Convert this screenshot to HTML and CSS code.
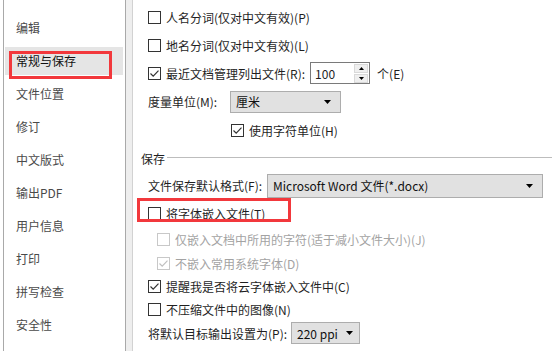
FILE: index.html
```html
<!DOCTYPE html>
<html>
<head>
    <title>选项 - 常规与保存</title>
    <link rel="stylesheet" href="styles.css">
</head>
<body>
    <div class="optWindow">
        <nav class="sideNav">
            <div class="navItem">编辑</div>
            <div class="navItem active">常规与保存<span class="markBox navMark"></span></div>
            <div class="navItem">文件位置</div>
            <div class="navItem">修订</div>
            <div class="navItem">中文版式</div>
            <div class="navItem">输出PDF</div>
            <div class="navItem">用户信息</div>
            <div class="navItem">打印</div>
            <div class="navItem">拼写检查</div>
            <div class="navItem">安全性</div>
        </nav>
        <div class="splitter"></div>
        <main class="optPanel">
            <div class="optRow h27">
                <span class="chk"></span>
                <span class="label">人名分词(仅对中文有效)(P)</span>
            </div>
            <div class="optRow h28">
                <span class="chk"></span>
                <span class="label">地名分词(仅对中文有效)(L)</span>
            </div>
            <div class="optRow h28">
                <span class="chk checked"><svg viewBox="0 0 13 13"><path d="M2.5 6.5 L5.2 9.2 L10.5 3.6"/></svg></span>
                <span class="label">最近文档管理列出文件(R):</span>
                <span class="spinBox">
                    <span class="spinVal">100</span>
                    <span class="spinBtns">
                        <span class="spinBtn"><svg viewBox="0 0 7 4"><path d="M0 4 L3.5 0 L7 4 Z"/></svg></span>
                        <span class="spinBtn"><svg viewBox="0 0 7 4"><path d="M0 0 L7 0 L3.5 4 Z"/></svg></span>
                    </span>
                </span>
                <span class="label unit">个(E)</span>
            </div>
            <div class="optRow h29">
                <span class="label measureLabel">度量单位(M):</span>
                <span class="combo measureCombo">
                    <span class="comboText">厘米</span>
                    <svg class="comboArrow" viewBox="0 0 7 4"><path d="M0 0 L7 0 L3.5 4 Z"/></svg>
                </span>
            </div>
            <div class="optRow h28 indentWide">
                <span class="chk checked"><svg viewBox="0 0 13 13"><path d="M2.5 6.5 L5.2 9.2 L10.5 3.6"/></svg></span>
                <span class="label">使用字符单位(H)</span>
            </div>

            <div class="groupHead">
                <span class="groupTitle">保存</span>
                <span class="groupLine"></span>
            </div>

            <div class="optRow h27">
                <span class="label formatLabel">文件保存默认格式(F):</span>
                <span class="combo formatCombo">
                    <span class="comboText">Microsoft Word 文件(*.docx)</span>
                    <svg class="comboArrow" viewBox="0 0 7 4"><path d="M0 0 L7 0 L3.5 4 Z"/></svg>
                </span>
            </div>
            <div class="optRow h28 marked">
                <span class="markBox rowMark"></span>
                <span class="chk"></span>
                <span class="label">将字体嵌入文件(T)</span>
            </div>
            <div class="optRow h25 indentSmall disabled">
                <span class="chk"></span>
                <span class="label">仅嵌入文档中所用的字符(适于减小文件大小)(J)</span>
            </div>
            <div class="optRow h23 indentSmall disabled">
                <span class="chk checked"><svg viewBox="0 0 13 13"><path d="M2.5 6.5 L5.2 9.2 L10.5 3.6"/></svg></span>
                <span class="label">不嵌入常用系统字体(D)</span>
            </div>
            <div class="optRow h23">
                <span class="chk checked"><svg viewBox="0 0 13 13"><path d="M2.5 6.5 L5.2 9.2 L10.5 3.6"/></svg></span>
                <span class="label">提醒我是否将云字体嵌入文件中(C)</span>
            </div>
            <div class="optRow h23">
                <span class="chk"></span>
                <span class="label">不压缩文件中的图像(N)</span>
            </div>
            <div class="optRow h24">
                <span class="label">将默认目标输出设置为(P):</span>
                <span class="combo ppiCombo">
                    <span class="comboText">220 ppi</span>
                    <svg class="comboArrow" viewBox="0 0 7 4"><path d="M0 0 L7 0 L3.5 4 Z"/></svg>
                </span>
            </div>
        </main>
    </div>
</body>
</html>
```

FILE: styles.css
```css
body {
    margin: 0;
    background-color: #fff;
    color: #1f1f1f;
    font-family: "Noto Sans CJK SC", "Noto Sans", sans-serif;
    font-size: 12px;
}

.optWindow {
    display: flex;
    width: 552px;
    height: 351px;
    overflow: hidden;
}

/* left list */
.sideNav {
    display: flex;
    flex-direction: column;
    gap: 5px;
    margin-left: 3px;
    padding-top: 14px;
    width: 121px;
    border-left: 1px solid #a9a9a9;
    border-right: 1px solid #a9a9a9;
    flex-shrink: 0;
}

.navItem {
    position: relative;
    height: 28px;
    line-height: 28px;
    margin: 0 2px 0 1px;
    padding-left: 11px;
    color: #4a4a4a;
    white-space: nowrap;
}

.navItem.active {
    background-color: #e5e5e5;
    color: #111;
}

.splitter {
    width: 6px;
    background-color: #eeeeee;
    border-right: 1px solid #d2d2d2;
    flex-shrink: 0;
}

/* red annotation boxes */
.markBox {
    position: absolute;
    border: 3px solid #f2383c;
    box-sizing: border-box;
    pointer-events: none;
}

.navMark {
    left: 4px;
    top: 4px;
    width: 103px;
    height: 28px;
}

.rowMark {
    left: -11px;
    top: -1px;
    width: 154px;
    height: 24px;
}

/* right panel */
.optPanel {
    flex: 1;
    display: flex;
    flex-direction: column;
    padding: 4px 0 0 15px;
    white-space: nowrap;
}

.optRow {
    position: relative;
    display: flex;
    align-items: center;
}

.h23 { height: 23px; }
.h24 { height: 24px; }
.h25 { height: 25px; }
.h27 { height: 27px; }
.h28 { height: 28px; }
.h29 { height: 29px; }

.indentSmall {
    padding-left: 9px;
}

.indentWide {
    padding-left: 83px;
}

.chk {
    width: 13px;
    height: 13px;
    box-sizing: border-box;
    border: 1px solid #333;
    background-color: #fff;
    margin-right: 5px;
    flex-shrink: 0;
}

.chk svg {
    display: block;
    width: 13px;
    height: 13px;
    margin: -1px;
}

.chk svg path {
    fill: none;
    stroke: #333;
    stroke-width: 1.2;
}

.disabled {
    color: #a3a3a3;
}

.disabled .chk {
    border-color: #c8c8c8;
}

.disabled .chk svg path {
    stroke: #c0c0c0;
}

.spinBox {
    display: flex;
    align-items: center;
    justify-content: space-between;
    width: 60px;
    height: 22px;
    box-sizing: border-box;
    margin-left: 5px;
    padding: 1px 1px 1px 4px;
    border: 1px solid #7a7a7a;
}

.spinBtns {
    display: flex;
    flex-direction: column;
    gap: 1px;
}

.spinBtn {
    display: flex;
    align-items: center;
    justify-content: center;
    width: 14px;
    height: 9px;
    background-color: #efefef;
    border: 1px solid #d9d9d9;
    box-sizing: border-box;
}

.spinBtn svg {
    width: 5px;
    height: 3px;
}

.unit {
    margin-left: 7px;
}

.combo {
    display: flex;
    align-items: center;
    justify-content: space-between;
    box-sizing: border-box;
    background-color: #e1e1e1;
    border: 1px solid #adadad;
    padding: 0 9px 0 5px;
    color: #111;
}

.comboArrow {
    width: 7px;
    height: 4px;
}

.measureLabel {
    width: 82px;
}

.measureCombo {
    width: 111px;
    height: 22px;
}

.formatLabel {
    width: 119px;
}

.formatCombo {
    width: 276px;
    height: 24px;
}

.ppiCombo {
    width: 69px;
    height: 22px;
    margin-left: 4px;
    padding-right: 6px;
}

.groupHead {
    display: flex;
    align-items: center;
    height: 28px;
    margin-left: -7px;
}

.groupLine {
    flex: 1;
    height: 0;
    margin: -2px 0 0 2px;
    border-top: 1px solid #bdbdbd;
}
```
